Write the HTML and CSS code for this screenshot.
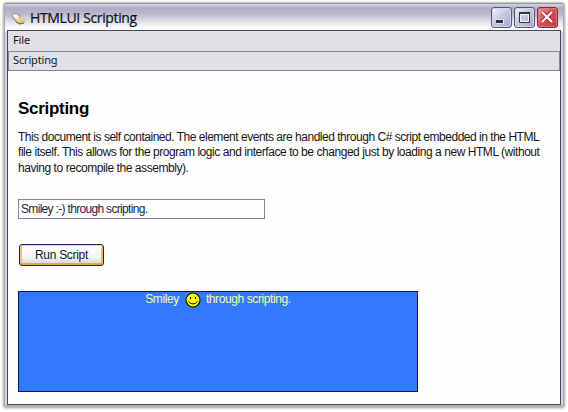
FILE: index.html
```
<!DOCTYPE html>
<html lang="en">
<head>
<meta charset="utf-8">
<title>HTMLUI Scripting</title>
<link rel="stylesheet" href="styles.css">
</head>
<body>
<div class="window">
  <header class="titlebar">
    <svg class="app-icon" width="16" height="14" viewBox="0 0 16 14">
      <path d="M1 2L5 1L10 4L13 7L13 11L9 12L4 9L1 5Z" fill="#c9c9c8" stroke="#8d8c90" stroke-width=".7"/>
      <path d="M2 3L6 2L9 5L5 8Z" fill="#f2f2ef"/>
      <path d="M2 5L5 9M6 2L9 5" stroke="#8b8b8b" stroke-width=".8"/>
      <path d="M6 6Q8 4 9 7L9 11L5 9Z" fill="#f4cf38"/>
      <path d="M10 4Q13 5 13 8L13 11L10 10Z" fill="#f1c82d"/>
      <path d="M5 10L9 12L13 11" fill="none" stroke="#6c654c"/>
      <path d="M7 6L8 9M11 5L12 8" stroke="#fff7b0"/>
    </svg>
    <h1 class="title">HTMLUI Scripting</h1>
    <div class="controls">
      <span class="control"><svg width="21" height="21"><path d="M5 14.500H13" stroke="#fff" stroke-width="4"/><path d="M5 14.500H12" stroke="#30334f" stroke-width="3"/></svg></span>
      <span class="control"><svg width="21" height="21"><path d="M6.500 7.500H14.500V14.500H6.500Z" fill="none" stroke="#f4f4fa"/><path d="M5.500 5.500H15.500V15.500H5.500Z" fill="none" stroke="#303247"/><path d="M5 6H16" stroke="#303247" stroke-width="2"/></svg></span>
      <span class="control close"><svg width="21" height="21"><path d="M5 5L15 15M15 5L5 15" stroke="#a22e39" stroke-width="4"/><path d="M5 5L15 15M15 5L5 15" stroke="#fff" stroke-width="2.200"/></svg></span>
    </div>
  </header>
  <div class="client">
    <nav class="menu">File</nav>
    <div class="tab">Scripting</div>
    <main class="document">
      <h2 class="heading">Scripting</h2>
      <p class="copy"><span class="line one">This document is self contained. The element events are handled through C# script embedded in the HTML</span><span class="line two">file itself. This allows for the program logic and interface to be changed just by loading a new HTML (without</span><span class="line three">having to recompile the assembly).</span></p>
      <div class="field">Smiley :-) through scripting.</div>
      <button class="run">Run Script</button>
      <div class="output">
        <span>Smiley</span>
        <svg class="smiley" width="16" height="16" viewBox="0 0 16 16"><circle cx="8" cy="8" r="7" fill="#ff0" stroke="#151500" stroke-width="1.200"/><path d="M5.500 5V7M10.500 5V7" stroke="#000" stroke-width="1.200"/><path d="M3.500 9.500Q8 14.500 12.500 9.500" fill="none" stroke="#000"/></svg>
        <span>through scripting.</span>
      </div>
    </main>
  </div>
</div>
</body>
</html>
```
FILE: styles.css
```
* { box-sizing: border-box; }
body {
  margin: 0;
  padding: 3px 4px 6px;
  width: 568px;
  height: 412px;
  overflow: hidden;
  background: #fff;
  font-family: "Liberation Sans", Arial, sans-serif;
  font-size: 12px;
  color: #151520;
}
.window {
  width: 560px;
  height: 403px;
  padding: 0 2px 1px 2px;
  border: 1px solid #a8a8a8;
  border-top-color: #95959d;
  border-radius: 3px 3px 0 0;
  background: linear-gradient(#d5d5e1 0, #aeaec6 4px, #b9b9cd 10px, #d8d8e4 16px, #fff 24px, #fff 26px, #d4d4da 29px, #d8d8da 100%);
  box-shadow: 0 0 2px 1px #bbbbb6, 0 2px 3px #a0a09c;
}
.titlebar {
  display: flex;
  height: 26px;
  padding: 3px 3px 0 4px;
}
.app-icon { margin: 5px 3px 0 0; }
.title {
  flex: 1;
  margin: 2px 0 0;
  font: 14px/18px "Open Sans", sans-serif;
  letter-spacing: -.36px;
  color: #101018;
  -webkit-text-stroke: .2px #101018;
  white-space: nowrap;
}
.controls { display: flex; gap: 2px; }
.control {
  width: 21px;
  height: 21px;
  border: 1px solid #535780;
  border-radius: 3px;
  background: linear-gradient(135deg, #f4f4fc, #c9cadf 45%, #a4a8c8);
  box-shadow: inset 0 0 0 1px #d6d6e9;
}
.control svg { display: block; margin: -1px; }
.close {
  border-color: #8d2838;
  background: linear-gradient(135deg, #f1a3a2, #db5357 45%, #bd3540);
  box-shadow: inset 0 0 0 1px #dc7779;
}
.client {
  height: 375px;
  border: 1px solid #464570;
  background: #fefefe;
}
.menu, .tab {
  background: #e0e0e7;
  font: 11px/20px "Noto Sans", sans-serif;
  letter-spacing: -.15px;
}
.menu { height: 20px; padding-left: 5px; line-height: 18px; }
.tab {
  height: 20px;
  padding-left: 4px;
  border: 1px solid #85858f;
  line-height: 16px;
}
.document { padding: 27px 10px 0; }
.heading {
  margin: 0;
  font-size: 17px;
  line-height: 22px;
  letter-spacing: -.3px;
  color: #000;
}
.copy { margin: 10px 0 0; line-height: 15.33px; }
.line { display: block; white-space: nowrap; }
.one { letter-spacing: -.48px; }
.two { letter-spacing: -.45px; }
.three { letter-spacing: -.44px; }
.field {
  width: 247px;
  height: 20px;
  margin-top: 23px;
  padding-left: 2px;
  border: 1px solid #8585a2;
  line-height: 18px;
  letter-spacing: -.68px;
  color: #24243c;
}
.run {
  display: block;
  width: 85px;
  height: 22px;
  margin: 25px 0 0 1px;
  padding: 0;
  border: 1px solid #1e234f;
  border-radius: 3px;
  background: linear-gradient(#fff 0, #f6f6f8 60%, #d2dbe9 90%);
  box-shadow: inset 0 1px #f8d89b, inset 0 -2px #e4a63d, inset 2px 0 #f1c273, inset -2px 0 #efba60;
  font: 12px/18px "Liberation Sans", sans-serif;
  letter-spacing: -.3px;
  color: #151530;
}
.output {
  display: flex;
  justify-content: center;
  width: 400px;
  height: 101px;
  margin-top: 25px;
  border: 1px solid #101c38;
  background: #3279ff;
  color: #eeffa8;
  line-height: 15px;
  letter-spacing: -.4px;
}
.smiley { margin: 0 5px 0 6px; }
```
